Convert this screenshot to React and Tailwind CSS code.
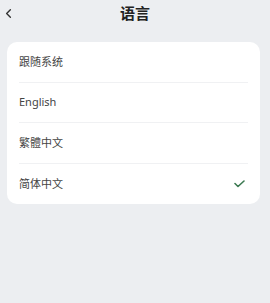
import { ChevronLeft } from 'lucide-react';

const langs = ['跟随系统', 'English', '繁體中文', '简体中文'];

export default function App() {
  const selected = '简体中文';
  return (
    <div className="w-[270px] h-[303px] bg-[#eceef1] font-['Noto_Sans','Noto_Sans_CJK_SC',sans-serif] text-[#444]">
      <div className="relative h-[27px] flex items-center justify-center">
        <ChevronLeft className="absolute left-[1px] top-[6px] w-[15px] h-[15px] text-[#333]" strokeWidth={2.2} />
        <h1 className="text-[15px] font-bold leading-none text-[#222]">语言</h1>
      </div>
      <div className="mx-[7px] mt-[15px] w-[253px] rounded-[10px] bg-white px-[12px]">
        {langs.map((l, i) => (
          <div
            key={l}
            className={`flex items-center justify-between h-[40.5px] text-[11px] ${i < langs.length - 1 ? 'border-b border-[#f0f1f3]' : ''}`}
          >
            <span>{l}</span>
            {l === selected && (
              <svg width="11" height="8" viewBox="0 0 11 8" className="mr-[3px]" fill="none">
                <polyline points="1,3.5 4,6.5 10,1" stroke="#3d7a52" strokeWidth="1.6" strokeLinecap="round" strokeLinejoin="round" />
              </svg>
            )}
          </div>
        ))}
      </div>
    </div>
  );
}
